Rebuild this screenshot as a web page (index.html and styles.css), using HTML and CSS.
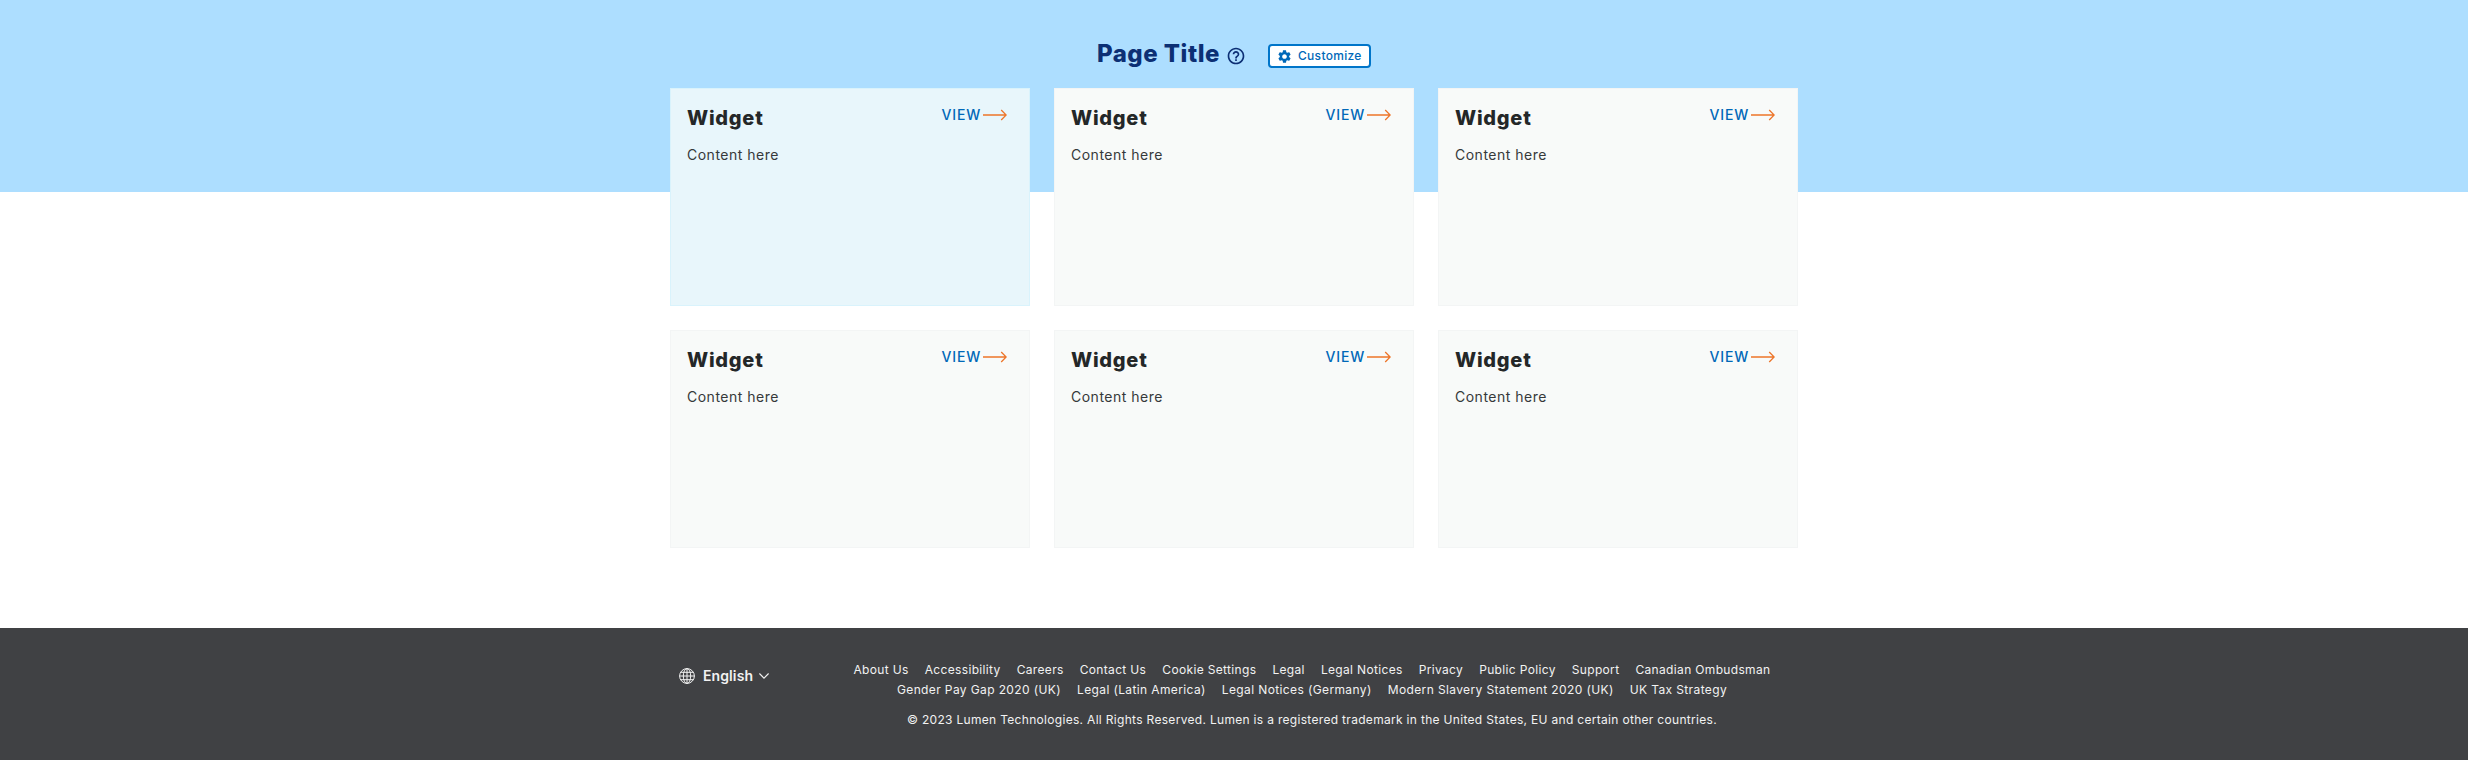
FILE: index.html
```html
<!DOCTYPE html>
<html lang="en">
<head>
<meta charset="utf-8">
<title>Page Title</title>
<link rel="stylesheet" href="styles.css">
</head>
<body>
<svg class="sprite" aria-hidden="true">
  <symbol id="arrow" viewBox="0 0 24 12"><path d="M0 6H23.2M18.2 1l5 5-5 5" fill="none" stroke="#ed7529" stroke-width="1.3"/></symbol>
</svg>
<main class="main">
  <header class="page-head">
    <h1 class="title">Page Title</h1>
    <svg class="help" viewBox="0 0 24 24"><path fill="#0c2f74" d="M11 18h2v-2h-2v2zm1-16C6.480 2 2 6.480 2 12s4.480 10 10 10 10-4.480 10-10S17.520 2 12 2zm0 18c-4.410 0-8-3.590-8-8s3.590-8 8-8 8 3.590 8 8-3.590 8-8 8zm0-14c-2.210 0-4 1.790-4 4h2c0-1.100.9-2 2-2s2 .9 2 2c0 2-3 1.750-3 5h2c0-2.250 3-2.500 3-5 0-2.210-1.790-4-4-4z"/></svg>
    <button class="customize">
      <svg class="gear" viewBox="2 2 20 20"><path fill="#0068b8" d="M19.140 12.940c.04-.3.06-.61.06-.94 0-.32-.02-.64-.07-.94l2.030-1.580c.18-.14.23-.41.12-.61l-1.920-3.320c-.12-.22-.37-.29-.59-.22l-2.390.96c-.5-.38-1.030-.7-1.620-.94l-.36-2.540c-.04-.24-.24-.41-.48-.41h-3.840c-.24 0-.43.17-.47.41l-.36 2.540c-.59.24-1.130.57-1.620.94l-2.390-.96c-.22-.08-.47 0-.59.22L2.740 8.870c-.12.21-.08.47.12.61l2.030 1.580c-.05.3-.09.63-.09.94s.02.64.07.94l-2.030 1.580c-.18.14-.23.41-.12.61l1.920 3.320c.12.22.37.29.59.22l2.390-.96c.5.38 1.030.7 1.620.94l.36 2.540c.05.24.24.41.48.41h3.840c.24 0 .44-.17.47-.41l.36-2.540c.59-.24 1.130-.56 1.620-.94l2.390.96c.22.08.47 0 .59-.22l1.920-3.320c.12-.22.07-.47-.12-.61l-2.010-1.580zM12 15.600c-1.980 0-3.600-1.620-3.600-3.600s1.620-3.600 3.600-3.600 3.600 1.620 3.600 3.600-1.620 3.600-3.600 3.600z"/></svg>
      <span class="customize-label">Customize</span>
    </button>
  </header>
  <section class="grid">
    <article class="card card-active"><div class="card-head"><h2 class="card-title">Widget</h2><a class="view">VIEW<svg class="arrow"><use href="#arrow"/></svg></a></div><p class="content">Content here</p></article>
    <article class="card"><div class="card-head"><h2 class="card-title">Widget</h2><a class="view">VIEW<svg class="arrow"><use href="#arrow"/></svg></a></div><p class="content">Content here</p></article>
    <article class="card"><div class="card-head"><h2 class="card-title">Widget</h2><a class="view">VIEW<svg class="arrow"><use href="#arrow"/></svg></a></div><p class="content">Content here</p></article>
    <article class="card"><div class="card-head"><h2 class="card-title">Widget</h2><a class="view">VIEW<svg class="arrow"><use href="#arrow"/></svg></a></div><p class="content">Content here</p></article>
    <article class="card"><div class="card-head"><h2 class="card-title">Widget</h2><a class="view">VIEW<svg class="arrow"><use href="#arrow"/></svg></a></div><p class="content">Content here</p></article>
    <article class="card"><div class="card-head"><h2 class="card-title">Widget</h2><a class="view">VIEW<svg class="arrow"><use href="#arrow"/></svg></a></div><p class="content">Content here</p></article>
  </section>
</main>
<footer class="footer">
  <div class="footer-inner">
    <div class="language">
      <svg class="globe" viewBox="0 0 16 16" fill="none" stroke="#f2f2f2" stroke-width="1"><circle cx="8" cy="8" r="7.400"/><ellipse cx="8" cy="8" rx="3.700" ry="7.400"/><path d="M8 .6v14.800M.6 8h14.800M1.700 4.300h12.600M1.700 11.700h12.600"/></svg>
      <span class="language-name">English</span>
      <svg class="chevron" viewBox="0 0 10 6"><path d="M.4.5L5 5.100 9.600.5" fill="none" stroke="#f2f2f2" stroke-width="1.100"/></svg>
    </div>
    <div class="legal">
      <nav class="links"><a>About Us</a><a>Accessibility</a><a>Careers</a><a>Contact Us</a><a>Cookie Settings</a><a>Legal</a><a>Legal Notices</a><a>Privacy</a><a>Public Policy</a><a>Support</a><a>Canadian Ombudsman</a></nav>
      <nav class="links links-second"><a>Gender Pay Gap 2020 (UK)</a><a>Legal (Latin America)</a><a>Legal Notices (Germany)</a><a>Modern Slavery Statement 2020 (UK)</a><a>UK Tax Strategy</a></nav>
      <p class="copyright">© 2023 Lumen Technologies. All Rights Reserved. Lumen is a registered trademark in the United States, EU and certain other countries.</p>
    </div>
  </div>
</footer>
</body>
</html>
```
FILE: styles.css
```css
* { box-sizing: border-box; }
body { margin: 0; font-family: Inter, "Liberation Sans", sans-serif; color: #242728; background: #fff; }
h1, h2, p { margin: 0; }
.sprite { display: none; }
.main { height: 628px; background: linear-gradient(#addeff 192px, #fff 192px); }
.page-head { height: 88px; padding: 41px 0 0 1097px; display: flex; align-items: flex-start; }
.title { width: 127px; font-size: 24px; line-height: 26px; font-weight: 800; letter-spacing: .5px; color: #0c2f74; white-space: nowrap; }
.help { width: 20px; height: 20px; margin: 5px 0 0 2px; }
.customize { width: 103px; height: 24px; margin: 3px 0 0 22px; padding: 0 0 0 8px; border: 2px solid #0075c9; border-radius: 4px; background: #fff; display: flex; align-items: center; gap: 7px; font-family: inherit; font-size: 12px; font-weight: 500; line-height: 16px; color: #0068b8; }
.gear { width: 13px; height: 13px; flex: none; }
.customize-label { letter-spacing: .3px; }
.grid { width: 1128px; margin: 0 auto; display: grid; grid-template-columns: repeat(3, 360px); gap: 24px; }
.card { height: 218px; padding: 17px 22px 0 16px; background: #f8faf9; border: 1px solid #f3f5f5; }
.card-active { background: #e8f6fb; border-color: #d9f3fc; }
.card-head { display: flex; justify-content: space-between; align-items: flex-start; }
.card-title { font-size: 20px; line-height: 24px; font-weight: 800; letter-spacing: .75px; }
.view { display: flex; align-items: center; gap: 2px; font-size: 14px; line-height: 18px; font-weight: 500; letter-spacing: .8px; color: #0068b8; }
.arrow { width: 24px; height: 12px; }
.content { margin-top: 15px; font-size: 14px; line-height: 20px; letter-spacing: .5px; color: #36393a; }
.footer { height: 132px; background: #404144; color: #f2f2f2; }
.footer-inner { width: 1128px; margin: 0 auto; display: flex; }
.language { width: 170px; padding: 39px 0 0 9px; display: flex; align-items: center; align-self: flex-start; }
.globe { width: 16px; height: 16px; }
.language-name { width: 54px; margin-left: 8px; font-size: 14px; line-height: 18px; font-weight: 600; letter-spacing: .1px; }
.chevron { width: 10px; height: 6px; margin-left: 2px; }
.legal { width: 944px; padding-top: 32px; }
.links { display: flex; justify-content: center; gap: 16px; font-size: 12px; line-height: 20px; white-space: nowrap; letter-spacing: .34px; }
.links-second { letter-spacing: .38px; }
.copyright { margin-top: 10px; text-align: center; font-size: 12px; line-height: 20px; letter-spacing: .31px; white-space: nowrap; }
```
